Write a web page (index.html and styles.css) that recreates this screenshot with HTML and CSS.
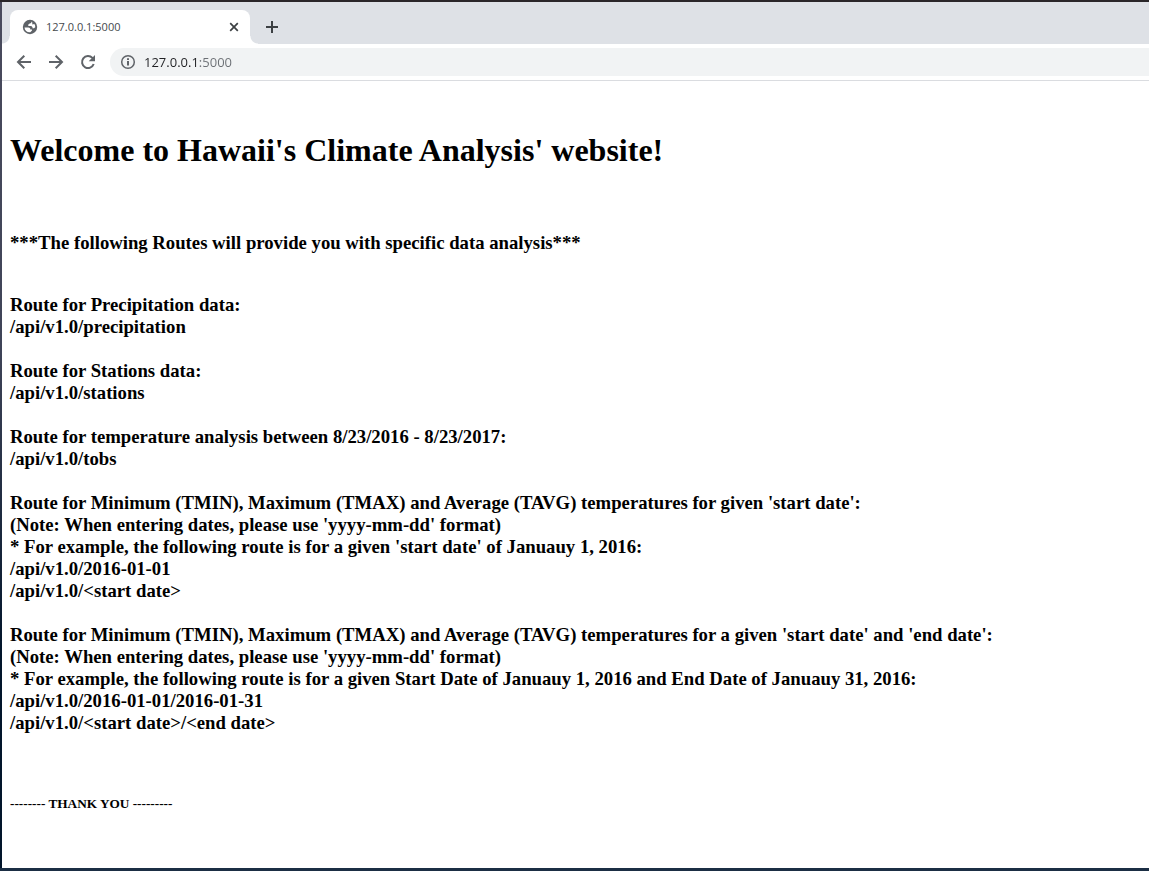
FILE: index.html
```html
<!DOCTYPE html>
<html lang="en">
<head>
<meta charset="utf-8">
<meta name="viewport" content="width=device-width, initial-scale=1">
<title>127.0.0.1:5000</title>
<link rel="stylesheet" href="styles.css">
</head>
<body>
<div class="window">
  <header class="browser">
    <div class="tab-strip">
      <div class="tab">
        <svg class="icon globe" viewBox="0 0 16 16" aria-hidden="true"><circle cx="8" cy="8" r="7.200" fill="#5f6368"/><path d="M9.500 2.600C9.500 3.900 8.900 4.400 7.700 4.500L6.300 5.500V7H9.300L10.500 8.200V9.200H12L13.200 8.300C13.400 6.900 13 5.800 12.300 4.900L10.300 5.500V3.500zM2.500 8.500H6.300C7.600 8.500 8.200 9.200 8.300 10.400H10V11.600L8.300 13.300C5.200 13.600 2.700 11.600 2.500 8.500z" fill="#fff"/></svg>
        <span class="tab-title">127.0.0.1:5000</span>
        <button class="tab-close" type="button" aria-label="Close tab"><svg class="glyph" viewBox="0 0 10 10"><path d="M1.200 1.200 8.800 8.800M8.800 1.200 1.200 8.800" stroke="#3c4043" stroke-width="1.700"/></svg></button>
      </div>
      <button class="new-tab" type="button" aria-label="New tab"><svg class="plus" viewBox="0 0 12 12"><path d="M6 0v12M0 6h12" stroke="#3c4043" stroke-width="2"/></svg></button>
    </div>
    <div class="toolbar">
      <button class="nav" type="button" aria-label="Back"><svg class="icon" viewBox="0 0 16 16"><path d="M15 8H2.500M8.300 1.700 2 8l6.300 6.300"/></svg></button>
      <button class="nav" type="button" aria-label="Forward"><svg class="icon" viewBox="0 0 16 16"><path d="M1 8h12.500M7.700 1.700 14 8l-6.300 6.300"/></svg></button>
      <button class="nav" type="button" aria-label="Reload"><svg class="icon" viewBox="0 0 16 16"><path d="M13.700 10A6 6 0 1 1 12.400 3.900L13.800 5.300"/><path d="M15 1v6.300H8.700z" class="solid"/></svg></button>
      <div class="address">
        <svg class="icon info" viewBox="0 0 16 16" aria-hidden="true"><circle cx="8" cy="8" r="6.300"/><path d="M8 7v4.500M8 4.300v1.700" stroke-width="2"/></svg>
        <input class="url" type="text" value="127.0.0.1:5000" aria-label="Address" spellcheck="false">
      </div>
    </div>
  </header>
  <main class="page">
    <h1 class="title">Welcome to Hawaii's Climate Analysis' website!</h1>
    <h3 class="intro">***The following Routes will provide you with specific data analysis***</h3>
    <div class="routes">
      <h3 class="route">Route for Precipitation data:<br>/api/v1.0/precipitation</h3>
      <h3 class="route">Route for Stations data:<br>/api/v1.0/stations</h3>
      <h3 class="route">Route for temperature analysis between 8/23/2016 - 8/23/2017:<br>/api/v1.0/tobs</h3>
      <h3 class="route">Route for Minimum (TMIN), Maximum (TMAX) and Average (TAVG) temperatures for given 'start date':<br>(Note: When entering dates, please use 'yyyy-mm-dd' format)<br>* For example, the following route is for a given 'start date' of Januauy 1, 2016:<br>/api/v1.0/2016-01-01<br>/api/v1.0/&lt;start date&gt;</h3>
      <h3 class="route">Route for Minimum (TMIN), Maximum (TMAX) and Average (TAVG) temperatures for a given 'start date' and 'end date':<br>(Note: When entering dates, please use 'yyyy-mm-dd' format)<br>* For example, the following route is for a given Start Date of Januauy 1, 2016 and End Date of Januauy 31, 2016:<br>/api/v1.0/2016-01-01/2016-01-31<br>/api/v1.0/&lt;start date&gt;/&lt;end date&gt;</h3>
    </div>
    <h5 class="thanks">-------- THANK YOU ---------</h5>
  </main>
</div>
</body>
</html>
```
FILE: styles.css
```css
* {
  box-sizing: border-box;
}

body {
  margin: 0;
  background: linear-gradient(#4a4b5d, #3f4458 40%, #02152b 75%, #02152b);
}

.window {
  display: flex;
  flex-direction: column;
  min-height: 100vh;
  padding-left: 2px;
  border-top: 2px solid #2a2629;
  border-bottom: 3px solid #1b2e44;
}

.browser {
  font-family: "Open Sans", "Noto Sans", sans-serif;
  background: #fff;
  border-bottom: 1px solid #dadce0;
}

button {
  display: flex;
  align-items: center;
  justify-content: center;
  padding: 0;
  border: 0;
  background: none;
}

.tab-strip {
  display: flex;
  align-items: flex-end;
  height: 42px;
  padding-left: 8px;
  background: radial-gradient(circle at 0 0, #dee1e6 7px, #fff 8px) 0 100% / 8px 8px no-repeat #dee1e6;
}

.tab {
  position: relative;
  display: flex;
  align-items: center;
  width: 240px;
  height: 34px;
  padding: 0 11px 0 12px;
  border-radius: 8px 8px 0 0;
  background: #fff;
}

.tab::after {
  content: "";
  position: absolute;
  left: 100%;
  bottom: 0;
  width: 8px;
  height: 8px;
  background: radial-gradient(circle at 100% 0, #dee1e6 7px, #fff 8px);
}

.icon {
  display: block;
  flex: none;
  width: 16px;
  height: 16px;
}

.tab-title {
  flex: 1;
  margin-left: 8px;
  font-size: 11px;
  line-height: 16px;
  color: #45494d;
}

.tab-close {
  width: 10px;
  height: 16px;
}

.glyph {
  width: 10px;
  height: 10px;
}

.new-tab {
  width: 28px;
  height: 34px;
  margin-left: 8px;
}

.plus {
  width: 12px;
  height: 12px;
}

.toolbar {
  display: flex;
  align-items: center;
  height: 36px;
  padding-left: 14px;
  gap: 16px;
}

.nav .icon,
.info {
  fill: none;
  stroke: #5f6368;
  stroke-width: 2;
}

.nav .solid {
  fill: #5f6368;
  stroke: none;
}

.info {
  stroke-width: 1.5;
}

.address {
  display: flex;
  flex: 1;
  align-items: center;
  gap: 8px;
  height: 28px;
  margin-left: -2px;
  padding-left: 10px;
  border-radius: 14px 0 0 14px;
  background: #f1f3f4;
}

.url {
  flex: 1;
  min-width: 0;
  padding: 0;
  border: 0;
  outline: 0;
  font: 13px/20px "Open Sans", "Noto Sans", sans-serif;
  color: transparent;
  background: linear-gradient(90deg, #202124 55px, #6b6f74 55px);
  -webkit-background-clip: text;
  background-clip: text;
}

.page {
  flex: 1;
  padding: 51px 8px 54px;
  background: #fff;
  color: #000;
  font-family: "Liberation Serif", "Times New Roman", serif;
}

h1,
h3,
h5 {
  margin: 0;
}

.title {
  font-size: 32px;
  line-height: 37px;
}

.intro {
  margin-top: 63px;
}

.intro,
.route {
  line-height: 22px;
}

.routes {
  display: grid;
  gap: 22px;
  margin-top: 40px;
}

.thanks {
  margin-top: 62px;
  line-height: 15px;
}
```
